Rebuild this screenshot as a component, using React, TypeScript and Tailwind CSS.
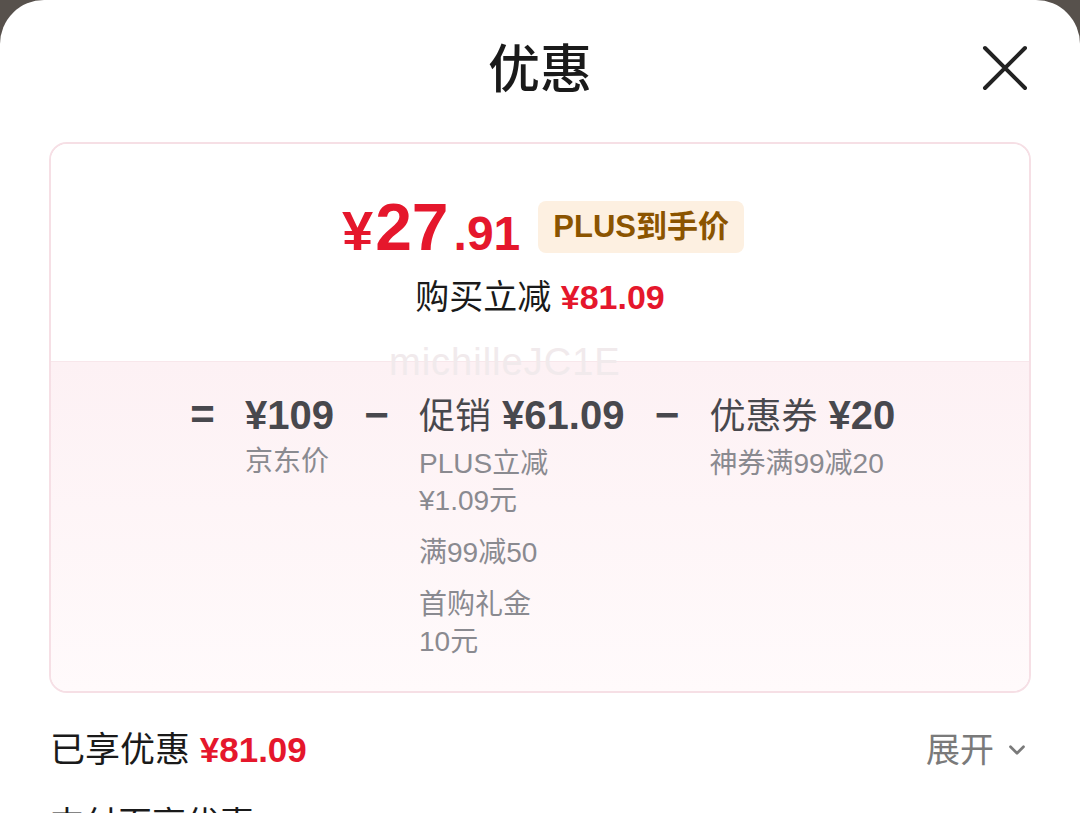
import { ChevronDown } from "lucide-react";

const font = { fontFamily: '"Liberation Sans", "Noto Sans CJK SC", sans-serif' };

const Op = ({ c }: { c: string }) => (
  <div className="w-[25px] text-center text-[42px] leading-[48px] font-bold text-[#48484d]">{c}</div>
);

const App = () => {
  return (
    <div className="w-[1080px] h-[813px] overflow-hidden bg-[#57514c]" style={font}>
      <div className="h-full bg-white rounded-t-[44px]">
        {/* header */}
        <div className="relative h-[142px] flex justify-center">
          <h1 className="pt-[39px] text-[52px] leading-[62px] font-medium text-[#1a1a1a]">优惠</h1>
          <button className="absolute right-[51px] top-[44px] w-[48px] h-[48px]">
            <svg viewBox="0 0 48 48" className="w-full h-full" fill="none" stroke="#222" strokeWidth="4" strokeLinecap="round">
              <path d="M4 4 L44 44 M44 4 L4 44" />
            </svg>
          </button>
        </div>

        {/* summary card */}
        <div className="mx-[49px] h-[551px] border-2 border-[#f6dfe5] rounded-[18px] overflow-hidden flex flex-col">
          <div className="relative h-[217px] bg-white flex flex-col items-center">
            <div className="mt-[50px] flex items-baseline gap-[18px] pl-[6px]">
              <div className="flex items-baseline font-bold text-[#e5172c] leading-none">
                <span className="text-[56px] mr-[2px]">¥</span>
                <span className="text-[66px]">27</span>
                <span className="text-[48px] ml-[5px]">.91</span>
              </div>
              <span className="px-[15px] h-[52px] flex items-center rounded-[8px] bg-[#fdf0e1] text-[#8b5400] text-[31px] font-bold self-center">
                PLUS到手价
              </span>
            </div>
            <div className="mt-[15px] text-[34px] leading-[44px] text-[#1a1a1a]">
              购买立减 <span className="text-[#e5172c] font-semibold">¥81.09</span>
            </div>
            <div className="absolute left-[338px] top-[190px] text-[38px] tracking-[1px] text-[#f1eaec] font-light select-none">
              michilleJC1E
            </div>
          </div>

          <div className="flex-1 border-t border-[#f8e7eb] bg-gradient-to-b from-[#fdf1f4] to-[#fffafb] pt-[29px] pl-[139px] flex items-start gap-[30px]">
            <Op c="=" />
            <div>
              <div className="text-[40px] leading-[48px] font-semibold text-[#48484d]">¥109</div>
              <div className="mt-[4px] text-[28px] leading-[37px] text-[#8a8a90]">京东价</div>
            </div>
            <Op c="−" />
            <div>
              <div className="text-[40px] leading-[48px] font-semibold text-[#48484d]">
                <span className="font-normal text-[36px]">促销</span> ¥61.09
              </div>
              <div className="mt-[4px] text-[28px] leading-[37px] text-[#8a8a90] flex flex-col gap-[15px]">
                <div>
                  PLUS立减
                  <br />
                  ¥1.09元
                </div>
                <div>满99减50</div>
                <div>
                  首购礼金
                  <br />
                  10元
                </div>
              </div>
            </div>
            <Op c="−" />
            <div>
              <div className="text-[40px] leading-[48px] font-semibold text-[#48484d]">
                <span className="font-normal text-[36px]">优惠券</span> ¥20
              </div>
              <div className="mt-[4px] text-[28px] leading-[37px] text-[#8a8a90]">神券满99减20</div>
            </div>
          </div>
        </div>

        {/* saved row */}
        <div className="mt-[34px] px-[50px] flex items-center justify-between h-[46px]">
          <div className="text-[35px] text-[#1a1a1a]">
            已享优惠 <span className="text-[#e5172c] font-semibold">¥81.09</span>
          </div>
          <div className="flex items-center gap-[10px] text-[34px] text-[#7a7a7a]">
            展开
            <ChevronDown className="w-[26px] h-[26px]" strokeWidth={2.5} />
          </div>
        </div>
        <div className="mt-[28px] px-[50px] text-[34px] leading-[46px] text-[#1a1a1a]">支付页享优惠</div>
      </div>
    </div>
  );
};

export default App;
